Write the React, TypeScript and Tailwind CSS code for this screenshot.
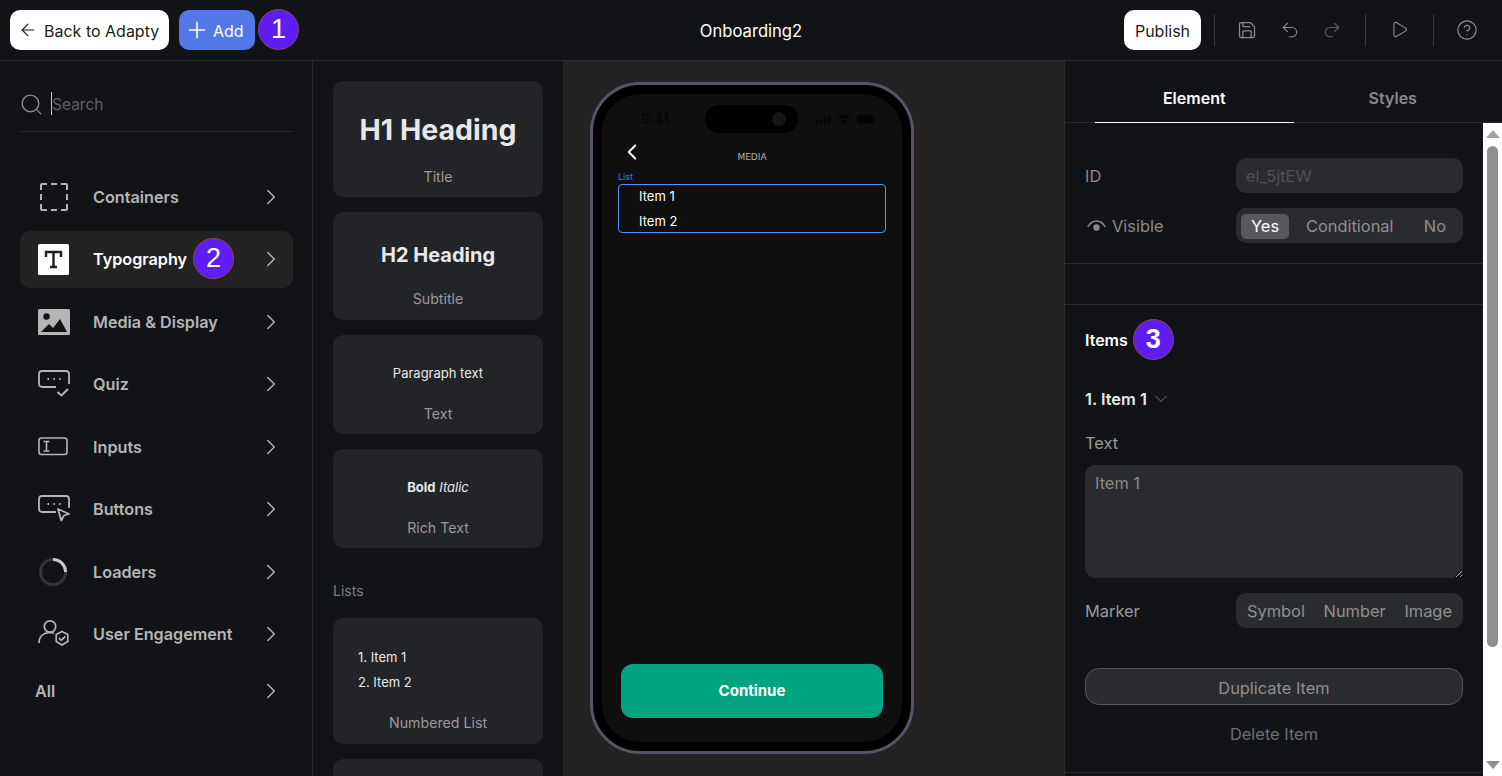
import { ArrowLeft, ChevronDown, ChevronLeft, ChevronRight, CircleHelp, Play, Plus, Redo2, Save, Search, Undo2 } from "lucide-react";
import type { ReactNode } from "react";

function Badge({ n }: { n: number }) {
  return (
    <span className="flex h-[41px] w-[41px] shrink-0 items-center justify-center rounded-full border border-[#8a4a52] bg-[#5f1df2] text-[27px] leading-none text-white [font-family:'Liberation_Sans',sans-serif]">
      {n}
    </span>
  );
}

// sidebar icons, drawn to match the category glyphs
const DashedIcon = (
  <svg width="30" height="30" viewBox="0 0 30 30" fill="none" stroke="#b5b5b5" strokeWidth="2" className="ml-px">
    <path d="M2 8V3a1 1 0 0 1 1-1h5M12 2h6M22 2h5a1 1 0 0 1 1 1v5M28 12v6M28 22v5a1 1 0 0 1-1 1h-5M18 28h-6M8 28H3a1 1 0 0 1-1-1v-5M2 18v-6" />
  </svg>
);
const TypeIcon = (
  <svg width="31" height="31" viewBox="0 0 31 31">
    <rect width="31" height="31" rx="1.5" fill="#fff" />
    <path d="M8 13V8h15v5M15.500 8v15M12 23h7" fill="none" stroke="#1f1f1f" strokeWidth="2.400" />
  </svg>
);
const ImageIcon = (
  <svg width="32" height="26" viewBox="0 0 32 26">
    <rect width="32" height="26" rx="1.500" fill="#b5b5b5" />
    <circle cx="8.500" cy="7.500" r="3.200" fill="#121317" />
    <path d="M3 23l8-8 4 4 7-9 7 13z" fill="#121317" />
  </svg>
);
const QuizIcon = (
  <svg width="32" height="28" viewBox="0 0 32 28" fill="none" stroke="#b5b5b5" strokeWidth="1.800">
    <path d="M18 17H4a3 3 0 0 1-3-3V4a3 3 0 0 1 3-3h24a3 3 0 0 1 3 3v10" />
    <path d="M9.500 9h1.500M15.300 9h1.500M21 9h1.500" />
    <path d="M19.500 22l4 3.500 6.500-6.500" strokeWidth="2" />
  </svg>
);
const InputIcon = (
  <svg width="30" height="20" viewBox="0 0 30 20" fill="none" stroke="#b5b5b5" strokeWidth="1.600">
    <rect x="1" y="1" width="28" height="16.500" rx="2.500" />
    <path d="M5.500 4.500h6M8.500 4.500v9.500M5.500 14h6" />
  </svg>
);
const ButtonIcon = (
  <svg width="32" height="28" viewBox="0 0 32 28" fill="none" stroke="#b5b5b5" strokeWidth="1.800">
    <path d="M18 17H4a3 3 0 0 1-3-3V4a3 3 0 0 1 3-3h24a3 3 0 0 1 3 3v9" />
    <path d="M9.500 9h1.500M15.300 9h1.500M21 9h1.500" />
    <path d="M20 14l11 5-5 1.500-2.800 5z" strokeLinejoin="round" />
  </svg>
);
const LoaderIcon = (
  <svg width="30" height="30" viewBox="0 0 30 30" fill="none" strokeWidth="3">
    <circle cx="15" cy="15" r="12.500" stroke="#35363a" />
    <path d="M15 2.500A12.500 12.500 0 0 1 27.500 15" stroke="#c9c9c9" />
  </svg>
);
const UserIcon = (
  <svg width="32" height="30" viewBox="0 0 32 30" fill="none" stroke="#b5b5b5" strokeWidth="1.700">
    <circle cx="12" cy="7.500" r="5.700" />
    <path d="M1 24c0-6 4-10 10-10.500 2 0 3.500.3 5 1" />
    <path d="M24 12.500l5.800 3v7l-5.800 3.500-5.800-3.500v-7z" />
    <path d="M21 19l2.300 2.300 4-4" />
  </svg>
);
const VisibleIcon = (
  <svg width="19" height="13" viewBox="0 0 19 13" fill="none" stroke="#8a8a8a" strokeWidth="1.500">
    <path d="M.7 7C3 3 6 1 9.500 1s6.500 2 8.800 6" />
    <circle cx="9.500" cy="7.500" r="3.200" fill="#8a8a8a" stroke="none" />
  </svg>
);

type Category = { label: string; icon: ReactNode; active?: boolean };

const categories: Category[] = [
  { label: "Containers", icon: DashedIcon },
  { label: "Typography", icon: TypeIcon, active: true },
  { label: "Media & Display", icon: ImageIcon },
  { label: "Quiz", icon: QuizIcon },
  { label: "Inputs", icon: InputIcon },
  { label: "Buttons", icon: ButtonIcon },
  { label: "Loaders", icon: LoaderIcon },
  { label: "User Engagement", icon: UserIcon },
];

function Sidebar() {
  return (
    <aside className="w-[313px] shrink-0 border-r border-[#2a2b2e] pl-5 pr-[19px]">
      <div className="flex h-[71px] items-center border-b border-[#2a2b2e] pt-[16px]">
        <Search size={25} strokeWidth={1.300} className="-ml-px text-[#8d8d8d]" />
        <span className="relative ml-[8px] mt-[2px] text-[15.500px] text-[#5f6063]">
          <span className="absolute -left-px -top-px h-[23px] w-px bg-[#c9c9c9]" />
          Search
        </span>
      </div>
      <div className="mt-[36px] flex flex-col gap-[5.500px]">
        {categories.map((c) => (
          <div
            key={c.label}
            className={`flex h-[57px] items-center rounded-[10px] pl-[18px] pr-[9px] ${c.active ? "bg-[#232323] text-white" : "text-[#b5b5b5]"}`}
          >
            <span className="flex w-[55px] shrink-0 items-center">{c.icon}</span>
            <span className="pt-px text-[16.200px] font-semibold">{c.label}</span>
            {c.active && (
              <span className="ml-[6px] -mt-px">
                <Badge n={2} />
              </span>
            )}
            <ChevronRight size={26} strokeWidth={1.300} className="ml-auto text-[#b5b5b5]" />
          </div>
        ))}
        <div className="flex h-[46px] items-center pl-[15px] pr-[9px] text-[16.200px] font-semibold text-[#b5b5b5]">
          All
          <ChevronRight size={26} strokeWidth={1.300} className="ml-auto" />
        </div>
      </div>
    </aside>
  );
}

function Card({ h, label, children }: { h: string; label: string; children: ReactNode }) {
  return (
    <div className={`flex shrink-0 flex-col items-center rounded-[10px] bg-[#232428] ${h}`}>
      {children}
      <span className="text-[14.200px] text-[#9a9a9a]">{label}</span>
    </div>
  );
}

function Gallery() {
  return (
    <div className="flex h-full w-[250px] shrink-0 flex-col overflow-hidden px-5 pt-[20px]">
      <div className="flex flex-col gap-[15px]">
        <Card h="h-[116px]" label="Title">
          <div className="pb-[17px] pt-[30px] text-[28.500px] font-bold leading-[38px] text-[#e8e8e8]">H1 Heading</div>
        </Card>
        <Card h="h-[108px]" label="Subtitle">
          <div className="pb-[16px] pt-[27px] text-xl font-bold leading-[33px] text-[#e8e8e8]">H2 Heading</div>
        </Card>
        <Card h="h-[99px]" label="Text">
          <div className="pb-[20px] pt-[28px] text-[13px] leading-[20px] text-[#e8e8e8]">Paragraph text</div>
        </Card>
        <Card h="h-[99px]" label="Rich Text">
          <div className="pb-[20px] pt-[28px] text-[13px] leading-[20px] text-[#e8e8e8]">
            <b>Bold</b> <i>Italic</i>
          </div>
        </Card>
      </div>
      <div className="mb-[17px] mt-[33px] text-sm leading-[20px] text-[#7d7d80]">Lists</div>
      <div className="flex flex-col gap-[15px]">
        <Card h="h-[126px]" label="Numbered List">
          <div className="w-full pb-[17px] pl-[25px] pt-[27px] text-[13px] leading-[25px] text-[#e8e8e8]">
            <div>1. Item 1</div>
            <div>2. Item 2</div>
          </div>
        </Card>
        <div className="h-[80px] shrink-0 rounded-[10px] bg-[#232428]" />
      </div>
    </div>
  );
}

function Phone() {
  return (
    <div className="relative h-[672px] w-[324px] rounded-[50px] border-[3px] border-[#5e5268] bg-black p-[9px]">
      {/* dynamic island sits on top of the status bar */}
      <div className="absolute left-[112px] top-[20px] flex h-[28px] w-[93px] items-center justify-end rounded-full bg-black pr-[12px]">
        <span className="h-[14px] w-[14px] rounded-full bg-[#161616]" />
      </div>
      <div className="flex h-full flex-col rounded-[38px] bg-[#0f0f0f] px-[16px] pb-[24px]">
        <div className="flex h-[42px] shrink-0 items-end justify-between pb-[7px] pl-[23px] pr-[12px]">
          <span className="text-sm font-medium leading-[20px] text-[#050505]">9:41</span>
          <svg width="58" height="10" viewBox="0 0 58 10" className="mb-[5px]" fill="#050505">
            <rect x="0" y="6" width="2.500" height="4" />
            <rect x="4" y="4.500" width="2.500" height="5.500" />
            <rect x="8" y="2.500" width="2.500" height="7.500" />
            <rect x="12" y="0.500" width="2.500" height="9.500" />
            <path d="M22 3.500a9 9 0 0 1 12 0l-1.500 1.800a6.500 6.500 0 0 0-9 0zM25 6.800a4.500 4.500 0 0 1 6 0L28 10z" />
            <rect x="41" y="1" width="17" height="8.500" rx="2" />
          </svg>
        </div>
        <div className="relative flex h-[30px] shrink-0 items-center justify-center pt-[13px]">
          <ChevronLeft size={26} strokeWidth={1.800} className="absolute left-px top-[3px] text-white" />
          <span className="text-[9px] font-medium text-[#b5b5b5] [font-family:'DejaVu_Sans',sans-serif]">MEDIA</span>
        </div>
        <div className="mt-[6px] text-[9px] leading-[10px] text-[#3f7fe0]">List</div>
        <div className="mt-[2px] flex h-[49px] flex-col justify-center gap-[5px] rounded-[4px] border border-[#4d94ff] pb-px pl-[20px] text-[13px] leading-[20px] text-white">
          <div>Item 1</div>
          <div>Item 2</div>
        </div>
        <div className="mx-[3px] mt-auto flex h-[54px] shrink-0 items-center justify-center rounded-[12px] bg-[#00a481] text-[15px] font-bold text-white">
          Continue
        </div>
      </div>
    </div>
  );
}

function Scrollbar() {
  return (
    <div className="flex w-[19px] shrink-0 flex-col items-center bg-white">
      <div className="mt-[7px] h-0 w-0 border-x-[7px] border-b-[8px] border-x-transparent border-b-[#a3a3a3]" />
      <div className="mt-[8px] h-[501px] w-[11px] rounded-full bg-[#8f8f8f]" />
      <div className="mt-auto mb-[7px] h-0 w-0 border-x-[7px] border-t-[8px] border-x-transparent border-t-[#8f8f8f]" />
    </div>
  );
}

function Inspector() {
  return (
    <aside className="flex w-[438px] shrink-0 flex-col border-l border-[#2a2b2e]">
      <div className="grid h-[62px] shrink-0 grid-cols-2 border-b border-[#2a2b2e] pl-[30px] pr-[10px] text-base font-semibold">
        <div className="-mb-px flex items-center justify-center border-b border-white pt-[12px] text-white">Element</div>
        <div className="flex items-center justify-center pt-[12px] text-[#8a8a8a]">Styles</div>
      </div>
      <div className="flex min-h-0 flex-1">
        <div className="flex min-w-0 flex-1 flex-col text-[16.400px]">
          <div className="flex h-[141px] shrink-0 flex-col gap-[15px] border-b border-[#2a2b2e] pl-5 pr-[20px] pt-[35px] text-[#8a8a8a]">
            <div className="flex items-center justify-between">
              <span className="pt-[2px]">ID</span>
              <div className="flex h-[35px] w-[227px] items-center rounded-[10px] bg-[#2a2b2f] px-[10px] pt-[2px] text-[#505154]">el_5jtEW</div>
            </div>
            <div className="flex items-center justify-between">
              <span className="flex items-center gap-[6px] pl-[2px] pt-[2px]">
                {VisibleIcon}
                Visible
              </span>
              <div className="flex h-[35px] w-[227px] items-center rounded-[10px] bg-[#2a2b2f] pl-[5px] pr-[17px] pt-px text-[#909090]">
                <span className="flex h-[25px] w-[48px] items-center justify-center rounded-[5px] bg-[#57585b] pt-px text-white">Yes</span>
                <span className="ml-[17px] pt-px">Conditional</span>
                <span className="ml-auto pt-px">No</span>
              </div>
            </div>
          </div>
          <div className="h-[41px] shrink-0 border-b border-[#2a2b2e]" />
          <div className="flex flex-col pl-5 pr-[20px]">
            <div className="flex items-center gap-[5px] pt-[14px] text-base font-semibold text-white">
              Items
              <Badge n={3} />
            </div>
            <div className="mt-[27px] flex h-[24px] items-center gap-[4px] font-semibold text-[#e8e8e8]">
              1. Item 1
              <ChevronDown size={20} strokeWidth={1.100} className="text-[#8a8a8a]" />
            </div>
            <div className="mt-[20px] leading-[24px] text-[#9a9a9a]">Text</div>
            <textarea
              readOnly
              value="Item 1"
              className="mt-[10px] h-[113px] w-full rounded-[10px] bg-[#2a2b2f] px-[10px] py-[6px] text-[#8a8a8a] outline-none"
            />
            <div className="mt-[15px] flex items-center justify-between text-[#9a9a9a]">
              <span className="pt-[2px]">Marker</span>
              <div className="flex h-[35px] w-[227px] items-center justify-between rounded-[10px] bg-[#2a2b2f] px-[11px] pt-[2px] text-[#909090]">
                <span>Symbol</span>
                <span>Number</span>
                <span>Image</span>
              </div>
            </div>
            <div className="mt-[40px] flex h-[37px] items-center justify-center rounded-[14px] border border-[#55565a] bg-[#2a2b2f] pt-[3px] text-[#909090]">
              Duplicate Item
            </div>
            <div className="mt-[17px] text-center leading-[24px] text-[#6e6f72]">Delete Item</div>
          </div>
          <div className="mb-[3px] mt-auto border-b border-[#2a2b2e]" />
        </div>
        <Scrollbar />
      </div>
    </aside>
  );
}

export default function App() {
  return (
    <div className="flex h-screen w-full flex-col overflow-hidden bg-[#121317] text-base [font-family:Inter,sans-serif]">
      <header className="grid h-[61px] shrink-0 grid-cols-[1fr_auto_1fr] items-center border-b border-[#2a2b2e] px-[10px] pb-px">
        <div className="flex items-center">
          <button className="flex h-10 w-[159px] items-center gap-[6px] rounded-[10px] bg-white pl-[8px] text-base text-[#1c1c1c]">
            <ArrowLeft size={20} strokeWidth={1.400} />
            <span className="pt-[2px]">Back to Adapty</span>
          </button>
          <button className="ml-[10px] mr-[3px] flex h-10 w-[76px] items-center gap-[3px] rounded-[10px] bg-[#5178e6] pl-[5px] text-base text-white">
            <Plus size={26} strokeWidth={1.500} />
            <span className="pt-[2px]">Add</span>
          </button>
          <Badge n={1} />
        </div>
        <div className="pt-[3px] text-[16.600px] text-white">Onboarding2</div>
        <div className="flex items-center justify-end text-[#8d8d8d]">
          <button className="flex h-10 w-[77px] items-center justify-center rounded-[10px] bg-white pt-[2px] text-base text-[#1c1c1c]">Publish</button>
          <span className="ml-[13px] h-8 w-px bg-[#3a3b3e]" />
          <Save size={20} strokeWidth={1.500} className="ml-[22px]" />
          <Undo2 size={20} strokeWidth={1.300} className="ml-[23px]" />
          <Redo2 size={20} strokeWidth={1.300} className="ml-[22px] text-[#5f6063]" />
          <span className="ml-[23px] h-8 w-px bg-[#3a3b3e]" />
          <Play size={19} strokeWidth={1.400} className="ml-[24px]" />
          <span className="ml-[24px] h-8 w-px bg-[#3a3b3e]" />
          <CircleHelp size={22} strokeWidth={1.300} className="ml-[22px] mr-[14px]" />
        </div>
      </header>
      <main className="flex min-h-0 flex-1">
        <Sidebar />
        <Gallery />
        <div className="min-w-0 flex-1 bg-[#232323] pl-[27px] pt-[21px]">
          <Phone />
        </div>
        <Inspector />
      </main>
    </div>
  );
}
